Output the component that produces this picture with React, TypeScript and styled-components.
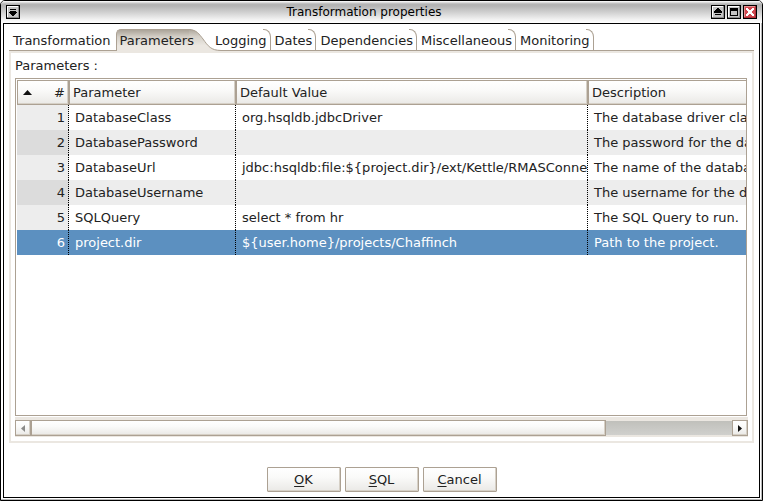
import React from "react";
import styled, { createGlobalStyle, css } from "styled-components";

const line = "#aca193";
const beige = "#ebe7e1";
const face = "linear-gradient(#ffffff, #fafaf9 40%, #eae9e6)";

const GlobalStyle = createGlobalStyle`
  * { box-sizing: border-box; }
  body {
    margin: 0;
    background: #fff;
    color: #222;
    font-family: "DejaVu Sans", Verdana, sans-serif;
    font-size: 13px;
    line-height: 16px;
  }
  button {
    font: inherit;
    color: inherit;
    margin: 0;
    padding: 0;
    border: 0;
    background: none;
  }
`;

const Window = styled.div`
  display: flex;
  flex-direction: column;
  min-height: 100vh;
  padding: 0 2px 2px;
  border: 1px solid #000;
  border-radius: 5px 5px 0 0;
  background: #fff;
  box-shadow: inset -1px -1px 0 #b8b8b8;
`;

const TitleBar = styled.header`
  display: flex;
  align-items: center;
  gap: 2px;
  height: 22px;
  margin: 0 -2px;
  padding: 0 5px;
  border-radius: 4px 4px 0 0;
  background: linear-gradient(#ffffff 0, #e8e8e8 1px, #b4b4b4 3px, #b4b4b4 5px, #f4f4f4 19px, #ffffff 22px);
`;

const Title = styled.h1`
  flex: 1;
  margin: 0;
  padding-right: 3px;
  font-size: 12px;
  font-weight: 400;
  text-align: center;
  color: #000;
`;

const WindowButton = styled.button`
  display: block;
  width: 14px;
  height: 14px;
  svg { display: block; }
`;

const Client = styled.main`
  flex: 1;
  display: flex;
  flex-direction: column;
  padding: 5px;
  border: 1px solid #000;
  background: #fff;
`;

const TabList = styled.div`
  display: flex;
  height: 21px;
`;

const TabButton = styled.button<{ $active?: boolean; $edge?: boolean }>`
  position: relative;
  height: 21px;
  padding: 4px 4px 1px;
  white-space: nowrap;
  &:first-child { padding-right: 5px; }
  span { position: relative; }
  ${(p) =>
    p.$edge &&
    css`
      &::after {
        content: "";
        position: absolute;
        right: 0;
        top: 0;
        width: 7px;
        height: 21px;
        border-top: 1px solid ${line};
        border-right: 1px solid ${line};
        border-top-right-radius: 7px 8px;
      }
    `}
  ${(p) =>
    p.$active &&
    css`
      height: 22px;
      padding: 4px 17px 2px 4px;
      &::before {
        content: "";
        position: absolute;
        inset: 0 20px 0 0;
        border-left: 1px solid ${line};
        border-top: 1px solid ${line};
        border-top-left-radius: 5px;
        background: linear-gradient(#aba499, #d5d0c8 7px, ${beige} 16px);
      }
    `}
`;

const TabTail = styled.svg`
  position: absolute;
  right: -10px;
  top: 0;
`;

const Panel = styled.section`
  flex: 1;
  display: flex;
  flex-direction: column;
  border-top: 1px solid ${line};
`;

const PanelBody = styled.div`
  flex: 1;
  display: flex;
  flex-direction: column;
  padding: 0 4px 4px;
  border: 2px solid ${beige};
`;

const Caption = styled.h2`
  margin: 0;
  padding: 5px 0 4px;
  font-size: 13px;
  font-weight: 400;
`;

const GridBox = styled.div`
  flex: 1;
  margin-right: 1px;
  padding: 1px 0 0 1px;
  border: 1px solid ${line};
  overflow: hidden;
`;

const Grid = styled.table`
  width: 100%;
  table-layout: fixed;
  border-collapse: separate;
  border-spacing: 0;
`;

const Col = styled.col<{ $width?: number }>`
  width: ${(p) => (p.$width ? `${p.$width}px` : "auto")};
`;

const HeadCell = styled.th<{ $index?: boolean }>`
  height: 25px;
  padding: 0 3px;
  border: 1px solid ${line};
  background: ${face};
  box-shadow: inset -1px -1px 0 #d6d0c6;
  font-weight: 400;
  text-align: ${(p) => (p.$index ? "right" : "left")};
  &:last-child { border-right: 0; box-shadow: inset 0 -1px 0 #d6d0c6; }
`;

const SortHeader = styled.div`
  display: flex;
  align-items: center;
  justify-content: space-between;
  padding-left: 2px;
`;

const Row = styled.tr<{ $selected: boolean }>`
  background: #fff;
  &:nth-child(even) { background: #ededed; }
  ${(p) => p.$selected && css`&& { background: #5c90c0; color: #fff; }`}
`;

const Cell = styled.td`
  height: 25px;
  padding: 0 0 0 6px;
  overflow: hidden;
  white-space: nowrap;
  border-right: 1px dotted #000;
  &:last-child { border-right: 0; }
`;

const IndexCell = styled(Cell)<{ $selected: boolean }>`
  padding: 0 3px 0 0;
  text-align: right;
  ${(p) =>
    !p.$selected &&
    css`
      background: #ededed;
      ${Row}:nth-child(even) & { background: #dcdcdc; }
    `}
`;

const ScrollBar = styled.div`
  display: flex;
  height: 20px;
  margin-top: 1px;
  padding-top: 3px;
  background: ${beige};
`;

const ScrollArrow = styled.button`
  display: flex;
  align-items: center;
  justify-content: center;
  width: 16px;
  height: 16px;
  border: 1px solid ${line};
  background: ${face};
  box-shadow: inset -1px -1px 0 #d6d0c6;
`;

const ScrollTrack = styled.div`
  flex: 1;
  display: flex;
  height: 16px;
  background: linear-gradient(#c0c0bb, #d0d0cd);
  border-top: 1px solid ${beige};
  border-bottom: 1px solid ${beige};
`;

const ScrollThumb = styled.div`
  width: 82%;
  height: 16px;
  margin-top: -1px;
  border: 1px solid ${line};
  background: ${face};
  box-shadow: inset -1px -1px 0 #d6d0c6;
`;

const Actions = styled.footer`
  display: flex;
  justify-content: center;
  gap: 4px;
  padding-top: 24px;
`;

const ActionButton = styled.button`
  width: 74px;
  height: 25px;
  border: 1px solid ${line};
  border-radius: 1px;
  background: ${face};
  box-shadow: inset -1px -1px 0 #d6d0c6;
`;

const Mnemonic = styled.span`
  text-decoration: underline;
  text-decoration-thickness: 1px;
  text-underline-offset: 2px;
`;

type Glyph = "menu" | "shade" | "maximize" | "close";

function WindowIcon({ kind }: { kind: Glyph }) {
  const close = kind === "close";
  return (
    <svg width="14" height="14" viewBox="0 0 14 14" shapeRendering="crispEdges" aria-hidden="true">
      <rect x="0" y="0" width="14" height="14" rx="1" fill="#000" />
      <rect x="1" y="1" width="12" height="12" fill={close ? "#b03038" : "#8c8c8c"} />
      <path d="M1 1h11v1H2v10H1z" fill={close ? "#e89090" : "#fff"} />
      <rect x="2" y="2" width="10" height="10" fill={close ? "#d04850" : "#c4c4c4"} />
      {kind === "menu" && <path d="M4 4h6v1H4zM4 6h6v1h1v1h-1v1H9v1H8v1H6v-1H5V9H4V8H3V7h1z" fill="#000" />}
      {kind === "shade" && <path d="M6 3h2v1h1v1h1v1h1v2H3V6h1V5h1V4h1zM4 9h6v1H4z" fill="#000" />}
      {kind === "maximize" && <path d="M3 3h8v8H3zM4 6v4h6V6z" fill="#000" fillRule="evenodd" />}
      {close && (
        <path d="M3 3h2v1h1v1h2V4h1V3h2v2h-1v1H9v2h1v1h1v2H9v-1H8V9H6v1H5v1H3V9h1V8h1V6H4V5H3z" fill="#fff" />
      )}
    </svg>
  );
}

const tabs = ["Transformation", "Parameters", "Logging", "Dates", "Dependencies", "Miscellaneous", "Monitoring"];

const rows = [
  ["DatabaseClass", "org.hsqldb.jdbcDriver", "The database driver class."],
  ["DatabasePassword", "", "The password for the database."],
  ["DatabaseUrl", "jdbc:hsqldb:file:${project.dir}/ext/Kettle/RMASConne", "The name of the database."],
  ["DatabaseUsername", "", "The username for the database."],
  ["SQLQuery", "select * from hr", "The SQL Query to run."],
  ["project.dir", "${user.home}/projects/Chaffinch", "Path to the project."],
];

const actions = ["OK", "SQL", "Cancel"];

export default function App() {
  const selectedRow = 5;
  return (
    <>
      <GlobalStyle />
      <Window>
        <TitleBar>
          <WindowButton aria-label="Window menu"><WindowIcon kind="menu" /></WindowButton>
          <Title>Transformation properties</Title>
          <WindowButton aria-label="Shade"><WindowIcon kind="shade" /></WindowButton>
          <WindowButton aria-label="Maximize"><WindowIcon kind="maximize" /></WindowButton>
          <WindowButton aria-label="Close"><WindowIcon kind="close" /></WindowButton>
        </TitleBar>
        <Client>
          <TabList role="tablist">
            {tabs.map((name, i) => (
              <TabButton key={name} role="tab" aria-selected={i === 1} $active={i === 1} $edge={i > 1}>
                {i === 1 && (
                  <TabTail width="32" height="22" viewBox="0 0 32 22" aria-hidden="true">
                    <defs>
                      <linearGradient id="tail" x1="0" y1="0" x2="0" y2="1">
                        <stop offset="0" stopColor="#aba499" />
                        <stop offset="0.34" stopColor="#d5d0c8" />
                        <stop offset="0.75" stopColor={beige} />
                      </linearGradient>
                    </defs>
                    <path d="M0 0C8 1 10 5 14 10C19 17 22 21 32 21V22H0Z" fill="url(#tail)" />
                    <path d="M0 .5C8 1 10 5 14 10C19 17 22 21.5 32 21.5" fill="none" stroke={line} />
                  </TabTail>
                )}
                <span>{name}</span>
              </TabButton>
            ))}
          </TabList>
          <Panel>
            <PanelBody>
              <Caption>Parameters :</Caption>
              <GridBox>
                <Grid>
                  <colgroup>
                    <Col $width={52} />
                    <Col $width={167} />
                    <Col $width={352} />
                    <Col />
                  </colgroup>
                  <thead>
                    <tr>
                      <HeadCell $index aria-sort="ascending">
                        <SortHeader>
                          <svg width="9" height="5" viewBox="0 0 9 5" aria-hidden="true">
                            <path d="M4.5 0L9 5H0z" fill="#111" />
                          </svg>
                          #
                        </SortHeader>
                      </HeadCell>
                      <HeadCell>Parameter</HeadCell>
                      <HeadCell>Default Value</HeadCell>
                      <HeadCell>Description</HeadCell>
                    </tr>
                  </thead>
                  <tbody>
                    {rows.map((cells, i) => (
                      <Row key={cells[0]} $selected={i === selectedRow}>
                        <IndexCell $selected={i === selectedRow}>{i + 1}</IndexCell>
                        {cells.map((text, c) => (
                          <Cell key={c}>{text}</Cell>
                        ))}
                      </Row>
                    ))}
                  </tbody>
                </Grid>
              </GridBox>
              <ScrollBar>
                <ScrollArrow aria-label="Scroll left">
                  <svg width="4" height="7" viewBox="0 0 4 7" aria-hidden="true">
                    <path d="M4 0v7L0 3.5z" fill="#8a8a88" />
                  </svg>
                </ScrollArrow>
                <ScrollTrack>
                  <ScrollThumb />
                </ScrollTrack>
                <ScrollArrow aria-label="Scroll right">
                  <svg width="4" height="7" viewBox="0 0 4 7" aria-hidden="true">
                    <path d="M0 0v7l4-3.5z" fill="#111" />
                  </svg>
                </ScrollArrow>
              </ScrollBar>
            </PanelBody>
          </Panel>
          <Actions>
            {actions.map((label) => (
              <ActionButton key={label}>
                <Mnemonic>{label[0]}</Mnemonic>
                {label.slice(1)}
              </ActionButton>
            ))}
          </Actions>
        </Client>
      </Window>
    </>
  );
}
